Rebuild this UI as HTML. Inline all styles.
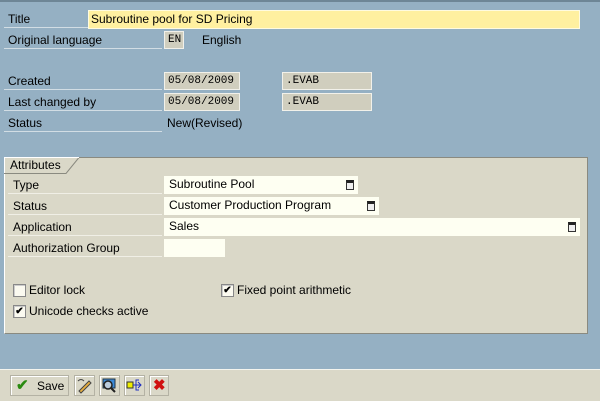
<!DOCTYPE html>
<html><head><style>
*{margin:0;padding:0;box-sizing:border-box}
body{width:600px;height:401px;background:#95b0c3;font-family:"Liberation Sans",sans-serif;font-size:12px;color:#000;position:relative;overflow:hidden}
.a{position:absolute}
.lbl{position:absolute;left:4px;width:158px;height:18px;border-bottom:1px solid #d2dde4;padding:2px 0 0 4px;white-space:nowrap}
.lbl2{position:absolute;left:8px;width:154px;height:18px;border-bottom:1px solid #f0efe6;padding:2px 0 0 5px}
.box{position:absolute;height:18px;background:#d0cebe;border:1px solid #f2f1ea;font-family:"Liberation Mono",monospace;font-size:11px;padding:2px 0 0 3px}
.fld{position:absolute;height:18px;background:#fefff2;padding:1px 0 0 5px}
.ico{position:absolute;top:4px;right:4px;width:8px;height:10px;border:1px solid #333;border-top:3px solid #222;background:#eee}
.cb{position:absolute;width:13px;height:13px;background:#fbfaf0;border:1px solid #888;box-shadow:inset 1px 1px 0 #ccc;font-size:10px;line-height:11px;text-align:center;font-weight:bold}
.btn{position:absolute;top:375px;height:21px;border:1px solid #b4b2a4;background:#dad8c8;box-shadow:inset 1px 1px 0 #fff}
</style></head><body>
<div class="a" style="left:0;top:0;width:600px;height:2px;background:#6e8696"></div>
<div class="lbl" style="top:10px;width:84px">Title</div>
<div class="a" style="left:88px;top:10px;width:492px;height:19px;background:#fff0a0;border:1px solid #fffbe0;padding:1px 0 0 2px">Subroutine pool for SD Pricing</div>
<div class="lbl" style="top:31px">Original language</div>
<div class="box" style="left:164px;top:31px;width:20px;padding-left:3px">EN</div>
<div class="a" style="left:202px;top:33px">English</div>
<div class="lbl" style="top:72px">Created</div>
<div class="box" style="left:164px;top:72px;width:76px">05/08/2009</div>
<div class="box" style="left:282px;top:72px;width:90px">.EVAB</div>
<div class="lbl" style="top:93px">Last changed by</div>
<div class="box" style="left:164px;top:93px;width:76px">05/08/2009</div>
<div class="box" style="left:282px;top:93px;width:90px">.EVAB</div>
<div class="lbl" style="top:114px">Status</div>
<div class="a" style="left:167px;top:116px">New(Revised)</div>

<div class="a" style="left:4px;top:157px;width:584px;height:177px;background:#dad8c8;border:1px solid #8a8a80;border-left-color:#fff;border-top-color:#8a8a80"></div>
<svg class="a" style="left:4px;top:157px" width="76" height="17"><path d="M0 16.5H62L75 0.5" stroke="#8a8a80" fill="none"/><path d="M0.5 16V0.5H75" stroke="#fff" fill="none"/></svg>
<div class="a" style="left:10px;top:158px">Attributes</div>
<div class="lbl2" style="top:176px">Type</div>
<div class="fld" style="left:164px;top:176px;width:194px">Subroutine Pool<span class="ico"></span></div>
<div class="lbl2" style="top:197px">Status</div>
<div class="fld" style="left:164px;top:197px;width:215px">Customer Production Program<span class="ico"></span></div>
<div class="lbl2" style="top:218px">Application</div>
<div class="fld" style="left:164px;top:218px;width:416px">Sales<span class="ico"></span></div>
<div class="lbl2" style="top:239px">Authorization Group</div>
<div class="fld" style="left:164px;top:239px;width:61px"></div>

<div class="cb" style="left:13px;top:284px"></div><div class="a" style="left:29px;top:283px">Editor lock</div>
<div class="cb" style="left:221px;top:284px">✔</div><div class="a" style="left:237px;top:283px">Fixed point arithmetic</div>
<div class="cb" style="left:13px;top:305px">✔</div><div class="a" style="left:29px;top:304px">Unicode checks active</div>

<div class="a" style="left:0;top:369px;width:600px;height:32px;background:#dad8c8;border-top:1px solid #f4f4ee"></div>
<div class="btn" style="left:10px;width:59px"><span class="a" style="left:5px;top:0;color:#2a8a10;font-size:15px;font-weight:bold">✔</span><span class="a" style="left:26px;top:3px">Save</span></div>
<div class="btn" style="left:74px;width:21px"><svg width="19" height="19"><path d="M4 15L14 5L16 7L6 17Z" fill="#e8b040" stroke="#444"/><path d="M3 5q3-3 6 0" stroke="#444" fill="none"/></svg></div>
<div class="btn" style="left:99px;width:21px"><svg width="19" height="19"><rect x="3" y="3" width="12" height="9" fill="#3a8ad8" stroke="#234"/><circle cx="8" cy="9" r="4" fill="#bcd" stroke="#222" stroke-width="1.5"/><path d="M11 12l4 4" stroke="#222" stroke-width="2"/></svg></div>
<div class="btn" style="left:124px;width:21px"><svg width="19" height="19"><rect x="2" y="6" width="6" height="6" fill="#ee0" stroke="#333"/><path d="M8 9h8M13 6l3 3-3 3M11 9v-5h3M11 9v5h3" stroke="#2030c0" fill="none"/></svg></div>
<div class="btn" style="left:149px;width:20px"><span class="a" style="left:3px;top:0;color:#d01010;font-size:15px;font-weight:bold">✖</span></div>
</body></html>
